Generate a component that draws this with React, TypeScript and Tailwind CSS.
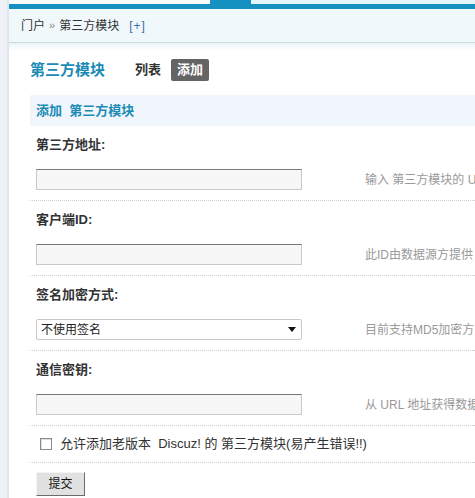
const font = { fontFamily: '"Liberation Sans", "Noto Sans CJK SC", sans-serif' };

const rows = [
  { label: '第三方地址:', hint: '输入 第三方模块的 URL 地址', kind: 'input' },
  { label: '客户端ID:', hint: '此ID由数据源方提供', kind: 'input' },
  { label: '签名加密方式:', hint: '目前支持MD5加密方式', kind: 'select' },
  { label: '通信密钥:', hint: '从 URL 地址获得数据', kind: 'input' },
];

function Field({ kind }: { kind: string }) {
  if (kind === 'select') {
    return (
      <div className="flex h-[21px] w-[266px] shrink-0 items-center justify-between rounded-[2px] border border-[#c8c8c8] bg-white pl-[4px] pr-[5px] text-[12px] text-[#222]">
        <span>不使用签名</span>
        <svg width="8" height="5" viewBox="0 0 8 5">
          <path d="M0 0h8L4 5z" fill="#111" />
        </svg>
      </div>
    );
  }
  return (
    <div className="h-[21px] w-[266px] shrink-0 border border-[#c9c9c9] border-t-[#777] bg-[#f7f7f7]" />
  );
}

export default function App() {
  return (
    <div className="flex h-[498px] w-[475px] overflow-hidden bg-white text-[#333]" style={font}>
      {/* left edge strip */}
      <div className="w-[7px] shrink-0 bg-[#eef2f7]" />
      <div className="w-[2px] shrink-0 bg-[#dbe6f0]" />

      <div className="flex min-w-0 flex-1 flex-col">
        {/* top nav edge */}
        <div className="flex h-[4px] shrink-0">
          <div className="w-[201px] bg-[#f7fbfd]" />
          <div className="w-[41px] bg-[#1491c1]" />
          <div className="flex-1 bg-[#e4f5fb]" />
        </div>
        <div className="h-[5px] shrink-0 bg-[#1690bf]" />

        {/* breadcrumb */}
        <div className="flex h-[34px] shrink-0 items-center gap-[4px] border-b border-[#c8d9df] bg-[#f1f8fc] pl-[12px] text-[12px]">
          <span className="text-[#333]">门户</span>
          <span className="text-[11px] text-[#888]">»</span>
          <span className="text-[#333]">第三方模块</span>
          <span className="ml-[6px] tracking-[1px] text-[#3b6fa6]">[+]</span>
        </div>
        <div className="h-[8px] shrink-0 bg-gradient-to-b from-[#ebf4f9] to-white" />

        <div className="ml-[21px] flex flex-col">
          {/* title row */}
          <div className="flex h-[38px] items-center">
            <span className="text-[15px] font-bold text-[#1b8bb6]">第三方模块</span>
            <span className="ml-[30px] text-[13px] font-bold text-[#333]">列表</span>
            <span className="ml-[10px] rounded-[2px] bg-[#646464] px-[6px] py-[1px] text-[13px] font-bold text-white">
              添加
            </span>
          </div>

          {/* sub header */}
          <div className="mt-[6px] flex h-[31px] items-center bg-[#f0f6fb] pl-[6px] text-[13px] font-bold text-[#1b8bb6]">
            添加&nbsp;&nbsp;第三方模块
          </div>

          {rows.map((r) => (
            <div key={r.label} className="flex flex-col border-b border-dotted border-[#cfcfcf]">
              <div className="pl-[6px] pt-[11px] pb-[8px] text-[13px] font-bold leading-[16px] text-[#333]">
                {r.label}
              </div>
              <div className="flex items-center pt-[8px] pb-[10px] pl-[6px]">
                <Field kind={r.kind} />
                <span className="ml-[63px] whitespace-nowrap text-[12px] text-[#999]">{r.hint}</span>
              </div>
            </div>
          ))}

          {/* checkbox row */}
          <div className="flex h-[37px] items-center border-b border-dotted border-[#cfcfcf] pl-[10px] text-[13px] text-[#333]">
            <span className="h-[12px] w-[12px] shrink-0 border border-[#8a8a8a] bg-white shadow-[inset_1px_1px_0_#ddd]" />
            <span className="ml-[8px] whitespace-nowrap">
              允许添加老版本&nbsp; Discuz! 的 第三方模块(易产生错误!!)
            </span>
          </div>

          {/* submit */}
          <div className="pl-[6px] pt-[8px]">
            <button className="h-[24px] w-[49px] border border-[#f4f4f4] border-r-[#6b6b6b] border-b-[#6b6b6b] bg-[#e1e1e1] text-[12px] text-[#111]">
              提交
            </button>
          </div>
        </div>
      </div>
    </div>
  );
}
